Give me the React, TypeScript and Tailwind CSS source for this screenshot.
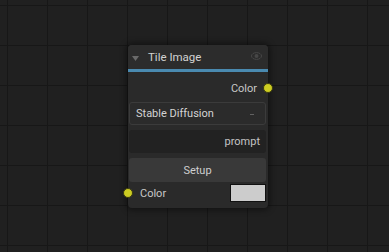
export default function App() {
  return (
    <div
      className="relative w-[389px] h-[252px] overflow-hidden bg-[#202020] bg-[linear-gradient(to_right,#171717_1px,transparent_1px),linear-gradient(to_bottom,#171717_1px,transparent_1px)] bg-[size:40px_40px] bg-[position:7px_5px]"
      style={{ fontFamily: 'Roboto, "Liberation Sans", sans-serif' }}
    >
      {/* Node */}
      <div className="absolute left-[128px] top-[45px] w-[140px] h-[163px] rounded-[4px] bg-[#2a2a2a] shadow-[0_0_6px_2px_rgba(0,0,0,0.45)] flex flex-col">
        {/* Header */}
        <div className="h-[24px] flex items-center pl-[4px] pr-[6px] rounded-t-[4px] bg-[#2c2c2c]">
          <svg width="7" height="5" viewBox="0 0 7 5" className="translate-y-[1px]">
            <path d="M0 0 L7 0 L3.5 5 Z" fill="#6a6a6a" />
          </svg>
          <span className="ml-[9px] text-[11.5px] text-[#d2d2d2] leading-none translate-y-[1px]">Tile Image</span>
          <svg width="11" height="8" viewBox="0 0 11 8" className="ml-auto translate-y-[-1px]">
            <ellipse cx="5.5" cy="4" rx="5" ry="3.4" fill="none" stroke="#474747" strokeWidth="1" />
            <circle cx="5.5" cy="4" r="2" fill="#474747" />
          </svg>
        </div>
        <div className="h-[3px] bg-[#4a8ab0]" />

        {/* Output row */}
        <div className="relative mt-[5px] h-[22px] flex items-center justify-end pr-[11px]">
          <span className="text-[11px] text-[#c8c8c8] translate-y-[1px]">Color</span>
          <span className="absolute right-[-5px] top-1/2 -translate-y-1/2 w-[10px] h-[10px] rounded-full bg-[#cccc22] border border-[#3a3a10]" />
        </div>

        {/* Select */}
        <div className="mt-[3px] ml-[1px] w-[137px] h-[23px] rounded-[3px] border border-[#3b3b3b] bg-[#2b2b2b] flex items-center pl-[6px] pr-[11px]">
          <span className="text-[11px] text-[#d4d4d4] translate-y-[1px]">Stable Diffusion</span>
          <span className="ml-auto w-[4px] h-[1px] bg-[#626262] translate-y-[1px]" />
        </div>

        {/* Prompt */}
        <div className="mt-[5px] ml-[1px] w-[137px] h-[23px] rounded-[3px] bg-[#222222] flex items-center justify-end pr-[6px]">
          <span className="text-[11px] text-[#c4c4c4] translate-y-[1px]">prompt</span>
        </div>

        {/* Setup */}
        <div className="mt-[5px] ml-[1px] w-[137px] h-[24px] rounded-[3px] bg-[#393939] flex items-center justify-center">
          <span className="text-[11px] text-[#cfcfcf] translate-y-[1px]">Setup</span>
        </div>

        {/* Input row */}
        <div className="relative mt-[2px] h-[18px] flex items-center pl-[12px] pr-[2px]">
          <span className="absolute left-[-5px] top-1/2 -translate-y-1/2 w-[10px] h-[10px] rounded-full bg-[#cccc22] border border-[#3a3a10]" />
          <span className="text-[11px] text-[#c8c8c8] translate-y-[1px]">Color</span>
          <span className="ml-auto w-[36px] h-[18px] bg-[#cccccc] border border-[#111111]" />
        </div>
      </div>
    </div>
  );
}
